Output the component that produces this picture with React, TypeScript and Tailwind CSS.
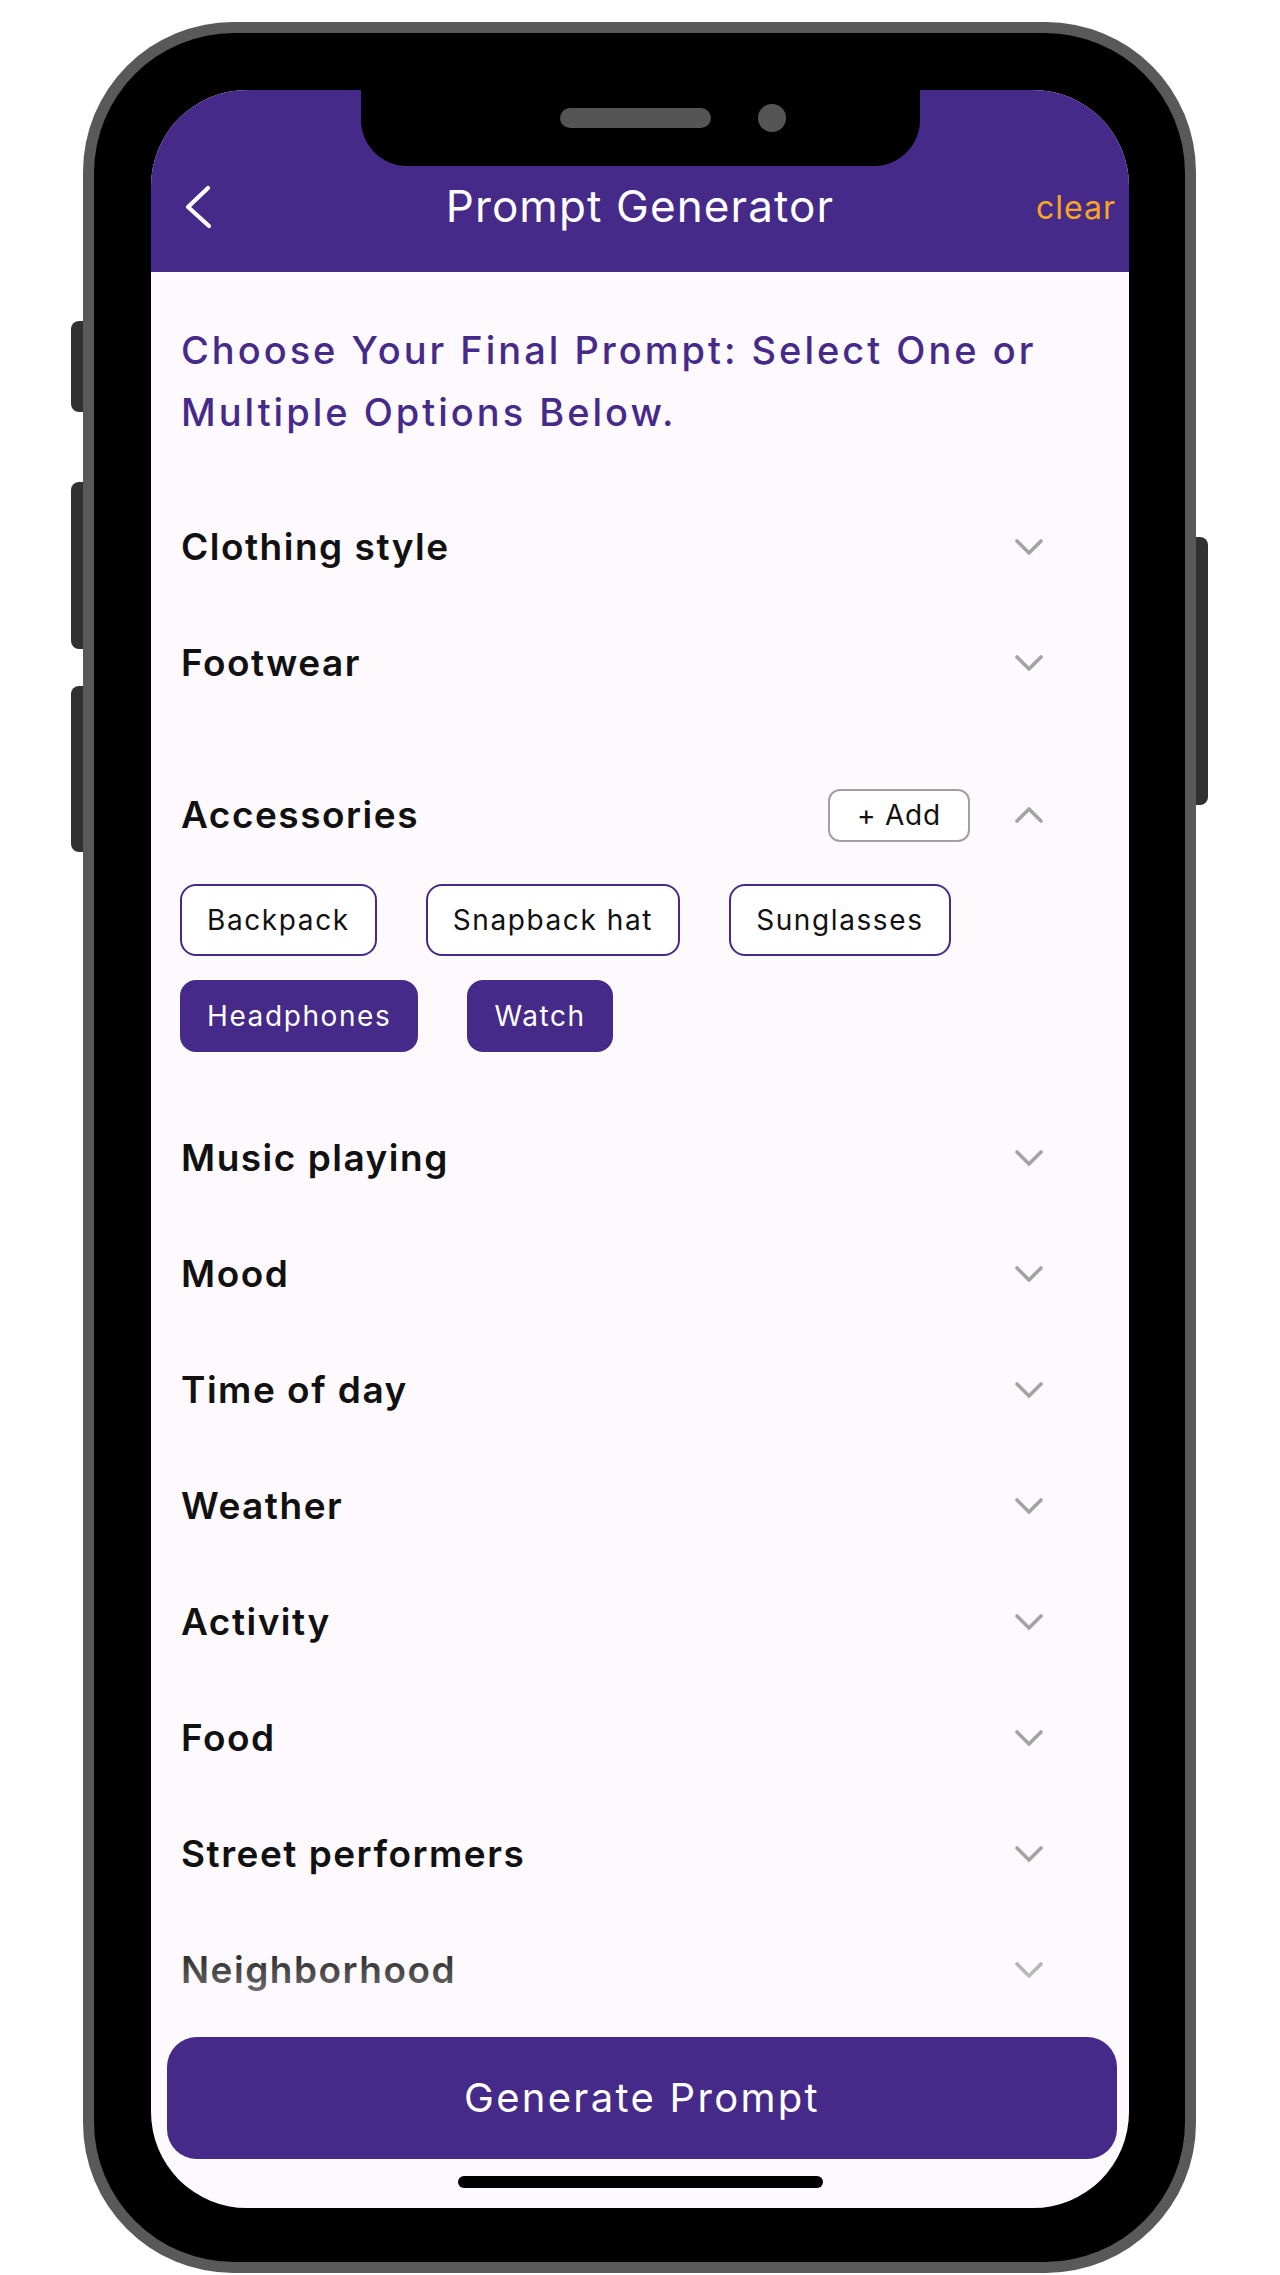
import type { JSX } from 'react';

const PURPLE = '#462a89';

const COLLAPSED_TOP = ['Clothing style', 'Footwear'];
const COLLAPSED_BOTTOM = [
  'Music playing',
  'Mood',
  'Time of day',
  'Weather',
  'Activity',
  'Food',
  'Street performers',
  'Neighborhood',
];

const ACCESSORIES = [
  { label: 'Backpack', selected: false },
  { label: 'Snapback hat', selected: false },
  { label: 'Sunglasses', selected: false },
  { label: 'Headphones', selected: true },
  { label: 'Watch', selected: true },
];

function Chevron({ up = false }: { up?: boolean }): JSX.Element {
  return (
    <svg width="28" height="16" viewBox="0 0 28 16" fill="none" aria-hidden="true">
      <polyline
        points={up ? '2,14 14,2 26,14' : '2,2 14,14 26,2'}
        stroke="#a3a3a3"
        strokeWidth="3.6"
        strokeLinecap="round"
        strokeLinejoin="round"
      />
    </svg>
  );
}

function SectionRow({ title }: { title: string }): JSX.Element {
  return (
    <div className="flex h-[116px] items-center pl-[30px] pr-[86px]">
      <span className="flex-1 text-[37px] font-semibold tracking-[1.5px] text-[#111]">{title}</span>
      <Chevron />
    </div>
  );
}

function Chip({ label, selected }: { label: string; selected: boolean }): JSX.Element {
  return (
    <span
      className={
        selected
          ? 'flex h-[72px] items-center rounded-[16px] border-2 border-[#462a89] bg-[#462a89] px-[25px] text-[28px] tracking-[1.6px] text-white'
          : 'flex h-[72px] items-center rounded-[16px] border-2 border-[#462a89] bg-white px-[25px] text-[28px] tracking-[1.6px] text-[#111]'
      }
    >
      {label}
    </span>
  );
}

export default function App(): JSX.Element {
  return (
    <div className="h-[2275px] w-[1280px] overflow-hidden bg-white pl-[83px] pt-[22px] [font-family:Inter,'Noto_Sans',sans-serif]">
      <div className="relative h-[2251px] w-[1113px] rounded-[150px] bg-[#595959] p-[11px]">
        {/* side buttons */}
        <span className="absolute left-[-12px] top-[299px] h-[91px] w-[12px] rounded-l-[8px] bg-[#313131]" />
        <span className="absolute left-[-12px] top-[460px] h-[167px] w-[12px] rounded-l-[8px] bg-[#313131]" />
        <span className="absolute left-[-12px] top-[664px] h-[166px] w-[12px] rounded-l-[8px] bg-[#313131]" />
        <span className="absolute right-[-12px] top-[515px] h-[268px] w-[12px] rounded-r-[8px] bg-[#313131]" />

        <div className="h-full rounded-[140px] bg-black pb-[54px] pl-[57px] pr-[56px] pt-[57px]">
          <div className="relative flex h-full flex-col overflow-hidden rounded-[96px] bg-[#fdf9fd]">
            {/* notch */}
            <div className="absolute left-[210px] top-0 z-10 h-[76px] w-[559px] rounded-b-[46px] bg-black">
              <span className="absolute left-[199px] top-[18px] h-[20px] w-[151px] rounded-full bg-[#555]" />
              <span className="absolute left-[397px] top-[14px] h-[28px] w-[28px] rounded-full bg-[#555]" />
            </div>

            {/* header */}
            <header className="h-[182px] shrink-0 bg-[#462a89] pt-[76px]">
              <div className="relative flex h-[80px] items-center justify-center">
                <svg
                  className="absolute left-[32px] top-[18px]"
                  width="30"
                  height="46"
                  viewBox="0 0 30 46"
                  fill="none"
                  aria-hidden="true"
                >
                  <polyline
                    points="25,4 5,23 26,42"
                    stroke="white"
                    strokeWidth="4.2"
                    strokeLinecap="round"
                    strokeLinejoin="round"
                  />
                </svg>
                <span className="text-[44px] leading-none tracking-[1.1px] text-white">Prompt Generator</span>
                <span className="absolute right-[13px] top-[18px] text-[32px] tracking-[1px] text-[#f6a623]">clear</span>
              </div>
            </header>

            {/* scroll content */}
            <div className="relative flex-1 overflow-hidden">
              <h2 className="pl-[30px] pr-[20px] pt-[47px] text-[38px] font-medium leading-[62px] tracking-[3px] text-[#462a89]">
                Choose Your Final Prompt: Select One or
                <br />
                Multiple Options Below.
              </h2>

              <div className="mt-[46px]">
                {COLLAPSED_TOP.map((t) => (
                  <SectionRow key={t} title={t} />
                ))}

                <section className="mb-[48px] mt-[36px]">
                  <div className="flex h-[116px] items-center pl-[30px] pr-[86px]">
                    <span className="flex-1 text-[37px] font-semibold tracking-[1.5px] text-[#111]">Accessories</span>
                    <button className="mr-[45px] flex h-[53px] w-[142px] items-center justify-center rounded-[12px] border-2 border-[#a0a0a0] bg-white text-[28px] tracking-[0.8px] text-[#111]">
                      + Add
                    </button>
                    <Chevron up />
                  </div>
                  <div className="mt-[11px] flex flex-wrap gap-x-[49px] gap-y-[24px] pl-[29px] pr-[86px]">
                    {ACCESSORIES.map((a) => (
                      <Chip key={a.label} label={a.label} selected={a.selected} />
                    ))}
                  </div>
                </section>

                {COLLAPSED_BOTTOM.map((t) => (
                  <SectionRow key={t} title={t} />
                ))}
              </div>

              <div className="pointer-events-none absolute bottom-0 left-0 right-0 h-[100px] bg-gradient-to-b from-[#fdf9fd00] to-[#fdf9fdb3]" />
            </div>

            {/* footer */}
            <div className="shrink-0 pb-[20px]">
              <button
                className="ml-[16px] flex h-[122px] w-[950px] items-center justify-center rounded-[30px] text-[40px] tracking-[2.3px] text-white"
                style={{ backgroundColor: PURPLE }}
              >
                Generate Prompt
              </button>
              <div className="mx-auto mt-[17px] h-[12px] w-[365px] rounded-full bg-black" />
            </div>
          </div>
        </div>
      </div>
    </div>
  );
}
